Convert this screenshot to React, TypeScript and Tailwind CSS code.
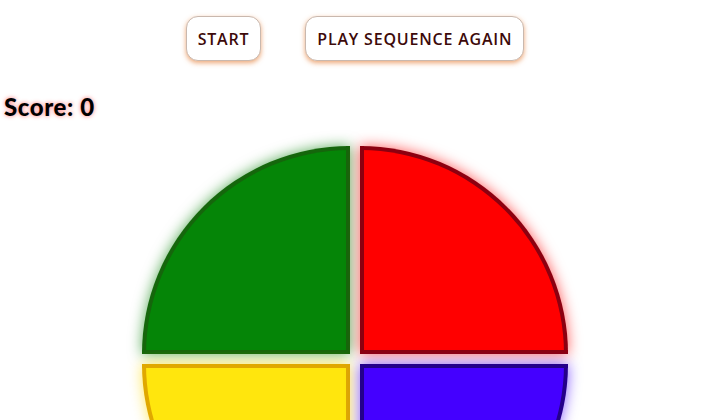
const Quadrant = ({ className }: { className: string }) => (
  <div className={`w-[208px] h-[208px] border-4 ${className}`} />
)

export default function App() {
  return (
    <div className="w-[710px] h-[420px] bg-white overflow-hidden font-['Open_Sans',sans-serif]">
      {/* Controls */}
      <div className="flex justify-center gap-[44px] pt-[16px]">
        <button
          type="button"
          className="h-[45px] px-[11px] rounded-xl bg-white border border-[#c9b8ae] shadow-[0_2px_5px_rgba(230,130,60,0.7)] text-[#3d0a0a] text-[16px] font-semibold tracking-[0.8px]"
        >
          START
        </button>
        <button
          type="button"
          className="h-[45px] px-[11px] rounded-xl bg-white border border-[#c9b8ae] shadow-[0_2px_5px_rgba(230,130,60,0.7)] text-[#3d0a0a] text-[16px] font-semibold tracking-[0.8px]"
        >
          PLAY SEQUENCE AGAIN
        </button>
      </div>

      {/* Score */}
      <div className="pl-[4px] pt-[32px] text-[24px] leading-[28px] font-black text-black tracking-[0.6px] font-['Lato',sans-serif] [text-shadow:0_0_4px_rgba(255,80,80,0.8)]">
        Score: 0
      </div>

      {/* Board */}
      <div className="mt-[25px] grid grid-cols-[208px_208px] gap-[10px] justify-center">
        <Quadrant className="rounded-tl-full bg-[#058507] border-[#15660c] shadow-[0_0_14px_rgba(0,128,0,0.65)]" />
        <Quadrant className="rounded-tr-full bg-[#ff0000] border-[#8c0010] shadow-[0_0_14px_rgba(255,0,0,0.65)]" />
        <Quadrant className="rounded-bl-full bg-[#ffe60d] border-[#e0a800] shadow-[0_0_14px_rgba(255,220,0,0.65)]" />
        <Quadrant className="rounded-br-full bg-[#4400ff] border-[#24008a] shadow-[0_0_14px_rgba(68,0,255,0.65)]" />
      </div>
    </div>
  )
}
